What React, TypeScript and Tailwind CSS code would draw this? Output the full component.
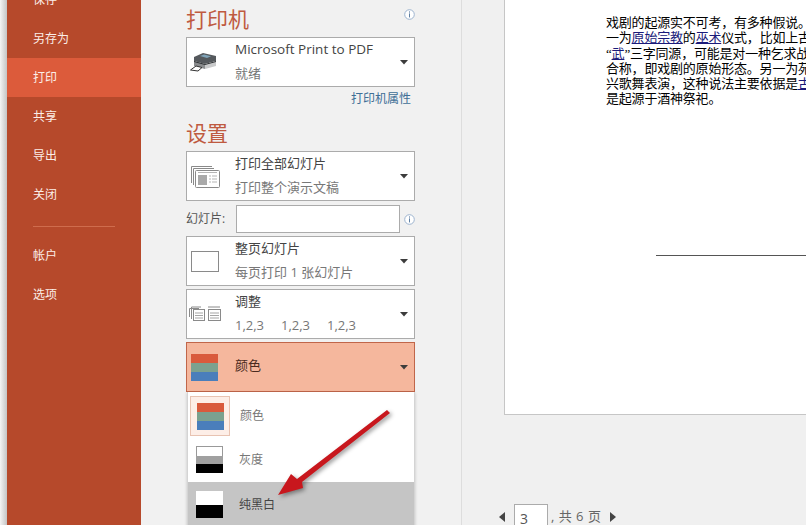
import React from "react";

function Caret() {
  return (
    <svg width="8" height="5" viewBox="0 0 8 5" className="shrink-0">
      <path d="M0 0H8L4 4.5Z" fill="#3c3c3c" />
    </svg>
  );
}

function Info() {
  return (
    <svg width="11" height="11" viewBox="0 0 11 11" className="shrink-0">
      <circle cx="5.5" cy="5.5" r="4.8" fill="#fff" stroke="#9db4cf" strokeWidth="1" />
      <rect x="5" y="2.4" width="1" height="1.2" fill="#5f7fa3" />
      <rect x="5" y="4.4" width="1" height="4" fill="#5f7fa3" />
    </svg>
  );
}

function PrinterIcon() {
  return (
    <svg width="30" height="20" viewBox="0 0 30 20" className="-ml-[2px]">
      <path d="M5 5L14 1L27 4L27 9L16 12L5 9Z" fill="#55595d" />
      <path d="M11 4L15 2.5L22 4.2L18 6Z" fill="#7fa3b8" />
      <path d="M5 9L16 12L16 17L5 14Z" fill="#8a8c8e" />
      <path d="M16 12L27 9L27 14L16 17Z" fill="#c9cacb" />
      <path d="M5 9L16 12L27 9V10L16 13L5 10Z" fill="#2f3235" />
      <path d="M1.5 18L7 14L13 15.5L9 19Z" fill="#fff" stroke="#333" strokeWidth="1" />
    </svg>
  );
}

function SlidesIcon() {
  return (
    <svg width="29" height="23" viewBox="0 0 29 23" fill="none" stroke="#8a8a8a" strokeWidth="1">
      <path d="M0.5 18V1.5H21" />
      <path d="M2.5 20V3.5H23" />
      <rect x="4.5" y="5.5" width="24" height="17" rx="1" fill="#fff" />
      <rect x="7" y="10" width="9" height="10" fill="#a9a9a9" stroke="none" />
      <path d="M7 7.5H26M18 11H20M21 11H26M18 14H20M21 14H26M18 17H20M21 17H26" stroke="#b5b5b5" />
    </svg>
  );
}

function PageIcon() {
  return <div className="w-[28px] h-[21px] border border-[#8a8a8a] bg-white" />;
}

function CollateIcon() {
  return (
    <svg width="33" height="16" viewBox="0 0 33 16" fill="none" stroke="#8a8a8a" strokeWidth="1" className="-ml-[2px]">
      <path d="M0.5 11V2.5H10" />
      <path d="M2.5 13V1H12" />
      <rect x="4.5" y="3.5" width="11" height="11" fill="#fff" />
      <path d="M6 7H14M6 9.5H14M6 12H14" stroke="#a5a5a5" />
      <path d="M19 1H31" />
      <rect x="19.5" y="3.5" width="12" height="11" fill="#fff" />
      <path d="M21 7H30M21 9.5H30M21 12H30" stroke="#a5a5a5" />
    </svg>
  );
}

function ColorBars() {
  return (
    <div className="w-[27px] h-[27px] flex flex-col">
      <div className="flex-1 bg-[#d95a3c]" />
      <div className="flex-1 bg-[#7ba18f]" />
      <div className="flex-1 bg-[#4a7ebb]" />
    </div>
  );
}

function Card({
  icon,
  title,
  sub,
  titleClass = "text-[13px]",
}: {
  icon: React.ReactNode;
  title: string;
  sub: React.ReactNode;
  titleClass?: string;
}) {
  return (
    <div className="h-[50px] shrink-0 border border-[#ababab] bg-white flex items-center">
      <div className="w-[48px] shrink-0 pl-[4px] flex items-center justify-start">{icon}</div>
      <div className="flex-1 flex flex-col gap-[7px] mb-[2px]">
        <div className={`${titleClass} leading-[17px] text-[#444444] whitespace-nowrap`}>{title}</div>
        <div className="text-[13px] leading-[17px] text-[#777777] whitespace-nowrap">{sub}</div>
      </div>
      <div className="pr-[6px]">
        <Caret />
      </div>
    </div>
  );
}

const menu = ["保存", "另存为", "打印", "共享", "导出", "关闭"];

export default function App() {
  return (
    <div className="relative w-[806px] h-[525px] overflow-hidden flex bg-[#f1f1f1] font-['Open_Sans','Noto_Sans_CJK_SC',sans-serif]">
      <div className="w-[7px] shrink-0 bg-gradient-to-r from-[#f4f4f4] to-[#c4c4c4]" />

      <nav className="w-[134px] shrink-0 bg-[#b6492b] text-[#fbeee8] text-[12px] flex flex-col">
        <div className="-mt-[20px]">
          {menu.map((m) => (
            <div
              key={m}
              className={`h-[39px] pl-[26px] flex items-center ${m === "打印" ? "bg-[#dc5b3b]" : ""}`}
            >
              {m}
            </div>
          ))}
        </div>
        <div className="ml-[26px] w-[82px] h-px bg-[#cf6c4d] mt-[12px]" />
        <div className="h-[39px] pl-[26px] flex items-center mt-[9px]">帐户</div>
        <div className="h-[39px] pl-[26px] flex items-center">选项</div>
      </nav>

      <section className="w-[320px] shrink-0 pl-[45px] pr-[46px] flex flex-col">
        <div className="mt-[9px] h-[22px] shrink-0 flex justify-between items-start">
          <h2 className="text-[21px] leading-[20px] text-[#bf5a40]">打印机</h2>
          <Info />
        </div>
        <div className="mt-[6px] shrink-0">
          <Card icon={<PrinterIcon />} title="Microsoft Print to PDF" sub="就绪" titleClass="text-[13.5px]" />
        </div>
        <div className="h-[24px] shrink-0 flex items-center justify-end pr-[4px] text-[12px] text-[#3f6f96]">打印机属性</div>
        <h2 className="mt-[12px] h-[22px] shrink-0 text-[21px] leading-[20px] text-[#bf5a40]">设置</h2>
        <div className="mt-[6px] shrink-0">
          <Card icon={<SlidesIcon />} title="打印全部幻灯片" sub="打印整个演示文稿" />
        </div>
        <div className="mt-[4px] h-[28px] shrink-0 flex items-center">
          <span className="w-[50px] shrink-0 text-[12px] text-[#555555]">幻灯片:</span>
          <div className="w-[164px] h-[28px] border border-[#ababab] bg-white" />
          <span className="ml-auto">
            <Info />
          </span>
        </div>
        <div className="mt-[3px] shrink-0">
          <Card icon={<PageIcon />} title="整页幻灯片" sub="每页打印 1 张幻灯片" />
        </div>
        <div className="mt-[3px] shrink-0">
          <Card
            icon={<CollateIcon />}
            title="调整"
            sub={
              <div className="flex">
                <span className="w-[46px]">1,2,3</span>
                <span className="w-[46px]">1,2,3</span>
                <span className="w-[46px]">1,2,3</span>
              </div>
            }
          />
        </div>
        <div className="mt-[3px] h-[50px] shrink-0 border border-[#c0664a] bg-[#f5b79d] flex items-center">
          <div className="w-[48px] shrink-0 pl-[4px]">
            <ColorBars />
          </div>
          <div className="flex-1 text-[13px] text-[#4a2a20] mb-[2px]">颜色</div>
          <div className="pr-[6px]">
            <Caret />
          </div>
        </div>
        <div className="ml-px shrink-0 bg-white border-x border-[#d4d4d4] shadow-[0_1px_3px_rgba(0,0,0,0.2)] text-[12px] flex flex-col">
          <div className="h-[45px] flex items-start pt-[4px] pl-[2px]">
            <div className="w-[40px] h-[40px] border border-[#e8c3b2] bg-[#fdeee7] flex items-center justify-center">
              <ColorBars />
            </div>
            <span className="ml-[10px] mt-[11px] text-[#777777]">颜色</span>
          </div>
          <div className="h-[45px] flex items-center pl-[8px]">
            <div className="w-[27px] h-[27px] flex flex-col">
              <div className="flex-1 bg-white border border-b-0 border-[#999999]" />
              <div className="flex-1 bg-[#a0a0a0]" />
              <div className="flex-1 bg-black" />
            </div>
            <span className="ml-[16px] text-[#777777]">灰度</span>
          </div>
          <div className="h-[45px] flex items-center pl-[8px] bg-[#c5c5c5]">
            <div className="w-[27px] h-[27px] flex flex-col">
              <div className="flex-1 bg-white" />
              <div className="flex-1 bg-black" />
            </div>
            <span className="ml-[16px] text-[#444444]">纯黑白</span>
          </div>
        </div>
      </section>

      <div className="w-px shrink-0 bg-[#dddddd]" />

      <main className="flex-1 min-w-0 flex flex-col bg-[#f0f0f0]">
        <div className="ml-[42px] h-[415px] shrink-0 bg-white border-l border-b border-[#c6c6c6] pl-[101px] pt-[15px] overflow-hidden">
          <div className="text-[13px] tracking-[-0.2px] leading-[15.3px] text-black whitespace-nowrap font-['Liberation_Serif','Noto_Sans_CJK_SC',sans-serif]">
            <p>戏剧的起源实不可考，有多种假说。</p>
            <p>
              一为<span className="text-[#1a1a7a] underline">原始宗教</span>的
              <span className="text-[#1a1a7a] underline">巫术</span>仪式，比如上古
            </p>
            <p>
              “<span className="text-[#1a1a7a] underline">武</span>”三字同源，可能是对一种乞求战
            </p>
            <p>合称，即戏剧的原始形态。另一为苑</p>
            <p>
              兴歌舞表演，这种说法主要依据是<span className="text-[#1a1a7a] underline">古</span>
            </p>
            <p>是起源于酒神祭祀。</p>
          </div>
          <div className="h-px bg-[#555555] ml-[50px] mt-[148px]" />
        </div>
        <div className="mt-[89px] flex items-start pl-[37px] text-[13px] text-[#666666]">
          <svg width="7" height="10" viewBox="0 0 7 10" className="mt-[8px]">
            <path d="M6 0V10L0 5Z" fill="#444444" />
          </svg>
          <div className="ml-[8px] w-[34px] h-[30px] border border-[#ababab] bg-white pl-[5px] pt-[3px] text-[14px] text-[#555555]">
            3
          </div>
          <span className="ml-[3px] mt-[3px] whitespace-pre tracking-[0.5px]">, 共 6 页</span>
          <svg width="7" height="10" viewBox="0 0 7 10" className="mt-[8px] ml-[8px]">
            <path d="M1 0V10L7 5Z" fill="#444444" />
          </svg>
        </div>
      </main>

      <svg
        width="130"
        height="100"
        viewBox="0 0 130 100"
        className="absolute left-[268px] top-[405px] drop-shadow-[2px_2px_2px_rgba(0,0,0,0.4)]"
      >
        <path d="M119 5L122 8L34 77L35 83L10 90L23 69L29 74Z" fill="#c8171d" />
      </svg>
    </div>
  );
}
